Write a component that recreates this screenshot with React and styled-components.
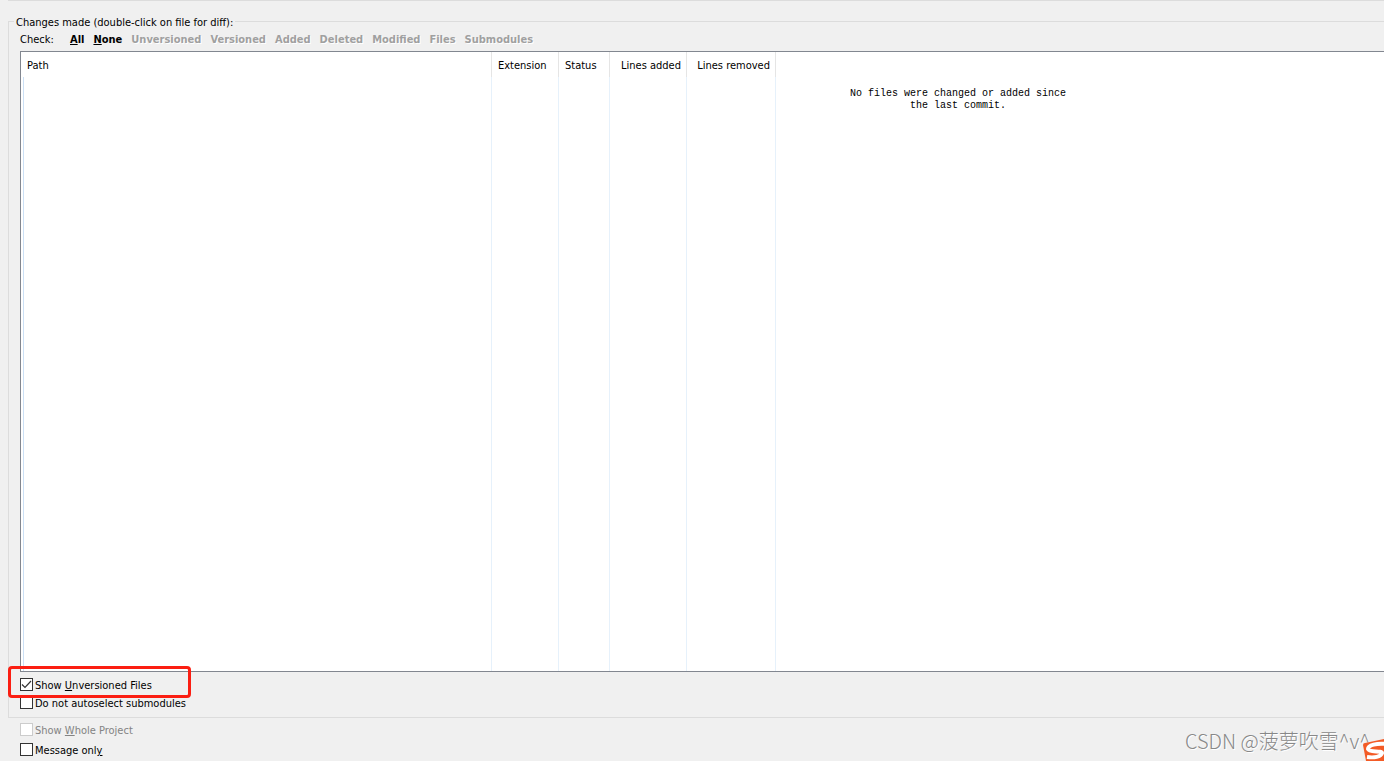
import React from 'react'
import { useState } from 'react'
import { createGlobalStyle, styled } from 'styled-components'

const filters = [
  { name: 'All', enabled: true },
  { name: 'None', enabled: true },
  { name: 'Unversioned' },
  { name: 'Versioned' },
  { name: 'Added' },
  { name: 'Deleted' },
  { name: 'Modified' },
  { name: 'Files' },
  { name: 'Submodules' },
]

const columns = [
  { name: 'Path', width: 471 },
  { name: 'Extension', width: 67 },
  { name: 'Status', width: 51 },
  { name: 'Lines added', width: 77, align: 'right' },
  { name: 'Lines removed', width: 89, align: 'right' },
]

const CheckOption = ({ id, checked, disabled, onChange, children }) => (
  <Option $disabled={disabled}>
    <CheckInput
      id={id}
      type="checkbox"
      checked={checked}
      disabled={disabled}
      onChange={(e) => onChange(id, e.target.checked)}
    />
    <label htmlFor={id}>{children}</label>
  </Option>
)

const App = () => {
  const [options, setOptions] = useState({
    unversioned: true,
    submodules: false,
    project: false,
    message: false,
  })

  const handleChange = (id, value) => setOptions({ ...options, [id]: value })

  return (
    <Dialog>
      <GlobalStyle />
      <Group>
        <GroupTitle>
          <span>Changes made (double-click on file for diff):</span>
        </GroupTitle>
        <GroupBody>
          <CheckBar>
            <CheckLabel>Check:</CheckLabel>
            {filters.map((item) => (
              <FilterButton key={item.name} type="button" disabled={!item.enabled}>
                {item.enabled ? (
                  <>
                    <u>{item.name[0]}</u>
                    {item.name.slice(1)}
                  </>
                ) : (
                  item.name
                )}
              </FilterButton>
            ))}
          </CheckBar>
          <FileList>
            <FileTable>
              <thead>
                <tr>
                  {columns.map((col) => (
                    <HeadCell key={col.name} $width={col.width} $align={col.align}>
                      {col.name}
                    </HeadCell>
                  ))}
                  <RestHead />
                </tr>
              </thead>
              <tbody>
                <tr>
                  {columns.map((col) => (
                    <BodyCell key={col.name} />
                  ))}
                  <EmptyCell>
                    <p>No files were changed or added since the last commit.</p>
                  </EmptyCell>
                </tr>
              </tbody>
            </FileTable>
          </FileList>
          <ListOptions>
            <Marked>
              <CheckOption id="unversioned" checked={options.unversioned} onChange={handleChange}>
                Show <u>U</u>nversioned Files
              </CheckOption>
            </Marked>
            <CheckOption id="submodules" checked={options.submodules} onChange={handleChange}>
              Do not autoselect submodules
            </CheckOption>
          </ListOptions>
        </GroupBody>
      </Group>
      <Footer>
        <CheckOption id="project" checked={options.project} disabled onChange={handleChange}>
          Show <u>W</u>hole Project
        </CheckOption>
        <CheckOption id="message" checked={options.message} onChange={handleChange}>
          Message onl<u>y</u>
        </CheckOption>
      </Footer>
      <Watermark>CSDN @菠萝吹雪^v^</Watermark>
      <InputLogo viewBox="0 0 22 22" aria-hidden="true">
        <path d="M1 6Q1 4 3 4L22 0V22H4Z" fill="#f35b26" />
        <path
          d="M24 5C15 4 6 6 6 10C7 14 20 11 20 14C19 18 12 19 5 18"
          fill="none"
          stroke="#fff"
          strokeWidth="4"
        />
      </InputLogo>
    </Dialog>
  )
}

const GlobalStyle = createGlobalStyle`
  *,
  *::before,
  *::after {
    box-sizing: border-box;
  }
  body {
    margin: 0;
    background: #f0f0f0;
    color: #000;
    font-family: 'DejaVu Sans Condensed', 'Noto Sans', sans-serif;
    font-size: 11px;
    line-height: 14px;
  }
`

const Dialog = styled.main`
  position: relative;
  display: flex;
  flex-direction: column;
  height: 100vh;
  padding-left: 8px;
  overflow: hidden;
  &::before {
    content: '';
    flex: none;
    height: 1px;
    margin-bottom: 13px;
    background: #dcdcdc;
  }
`

const Group = styled.section`
  flex: 1;
  display: flex;
  flex-direction: column;
  min-height: 0;
`

const GroupTitle = styled.h2`
  display: flex;
  margin: 0;
  font-size: 11px;
  font-weight: 400;
  white-space: nowrap;
  &::before,
  &::after {
    content: '';
    height: 1px;
    margin-top: 7px;
    background: #dcdcdc;
  }
  &::before {
    width: 6px;
  }
  &::after {
    flex: 1;
  }
  span {
    padding: 2px 2px 0;
  }
`

const GroupBody = styled.div`
  flex: 1;
  display: flex;
  flex-direction: column;
  min-height: 0;
  margin-top: -9px;
  padding: 12px 0 7px 11px;
  border-left: 1px solid #dcdcdc;
  border-bottom: 1px solid #dcdcdc;
`

const CheckBar = styled.div`
  display: flex;
  gap: 9px;
  height: 18px;
`

const CheckLabel = styled.span`
  width: 41px;
`

const FilterButton = styled.button`
  padding: 0;
  border: 0;
  background: none;
  color: #000;
  font: inherit;
  font-weight: 700;
  align-self: flex-start;
  &:disabled {
    color: #a0a0a0;
    text-shadow: 1px 1px 0 #fff;
  }
`

const FileList = styled.div`
  flex: 1;
  display: flex;
  min-height: 0;
  border: 1px solid #828790;
  border-right: 0;
  background: #fff;
`

const FileTable = styled.table`
  flex: 1;
  table-layout: fixed;
  width: 100%;
  height: 100%;
  border-spacing: 0;
`

const HeadCell = styled.th`
  width: ${(props) => props.$width}px;
  height: 25px;
  padding: 2px 5px 0 6px;
  border-right: 1px solid #e5e5e5;
  font-weight: 400;
  text-align: ${(props) => props.$align || 'left'};
  white-space: nowrap;
`

const RestHead = styled.td`
  padding: 0;
`

const BodyCell = styled.td`
  padding: 0;
  border-right: 1px solid #e6f1fb;
  &:first-child {
    background: linear-gradient(#cce0f5, #cce0f5) 2px 0 / 1px 100% no-repeat;
  }
`

const EmptyCell = styled.td`
  padding: 11px 0 0 70px;
  vertical-align: top;
  p {
    width: 224px;
    margin: 0;
    font-family: 'Liberation Mono', monospace;
    font-size: 10px;
    line-height: 12px;
    text-align: center;
  }
`

const ListOptions = styled.div`
  display: grid;
  gap: 4px;
  padding-top: 6px;
`

const Option = styled.div`
  display: flex;
  align-items: flex-start;
  gap: 2px;
  height: 14px;
  color: ${(props) => (props.$disabled ? '#838383' : '#000')};
  white-space: nowrap;
  label {
    padding-top: 1px;
  }
`

const CheckInput = styled.input`
  appearance: none;
  width: 13px;
  height: 13px;
  margin: 0;
  border: 1px solid #333;
  background: #fff;
  &:disabled {
    border-color: #ccc;
  }
  &:checked {
    background: #fff
      url("data:image/svg+xml,%3Csvg xmlns='http://www.w3.org/2000/svg' viewBox='0 0 11 11'%3E%3Cpath d='M1 5.5L4 8.5L10 2' fill='none' stroke='%23333' stroke-width='1.2'/%3E%3C/svg%3E");
  }
`

// red box drawn round the option
const Marked = styled.div`
  position: relative;
  &::after {
    content: '';
    position: absolute;
    left: -12px;
    top: -12px;
    width: 183px;
    height: 32px;
    border: 3px solid #fb1e12;
    border-radius: 4px;
    pointer-events: none;
  }
`

const Footer = styled.div`
  display: grid;
  gap: 6px;
  padding: 5px 0 4px 12px;
`

const Watermark = styled.div`
  position: absolute;
  right: 14px;
  bottom: 7px;
  color: #888;
  font-family: 'Noto Sans CJK SC', sans-serif;
  font-size: 20px;
  font-weight: 300;
  line-height: 26px;
  text-shadow: 1px 1px 0 #fff;
`

const InputLogo = styled.svg`
  position: absolute;
  right: 0;
  bottom: 0;
  width: 22px;
  height: 22px;
`

export default App
